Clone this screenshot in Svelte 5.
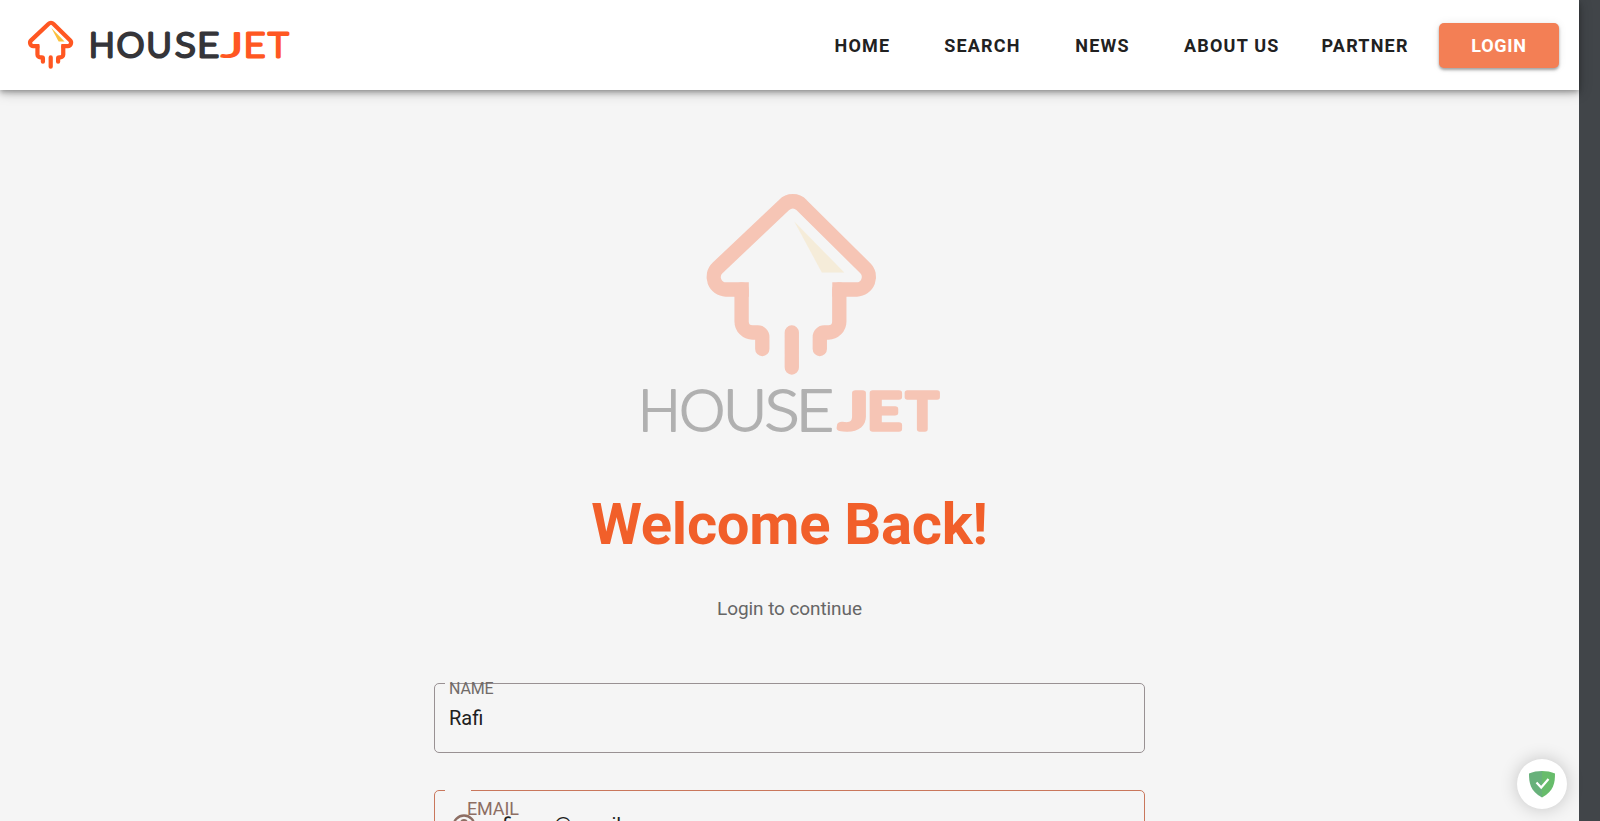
<script>
  const links = [
    { label: 'HOME', cls: 'home' },
    { label: 'SEARCH', cls: 'search' },
    { label: 'NEWS', cls: 'news' },
    { label: 'ABOUT US', cls: 'about' },
    { label: 'PARTNER', cls: 'partner' }
  ];

  const ctx = document.createElement('canvas').getContext('2d');

  // Stretch each wordmark letter so its inked area spans from left to right.
  function fit(letters, { weight, size, stroke }) {
    ctx.font = `${weight} 100px Lato`;
    return letters.map(([ch, left, right]) => {
      const m = ctx.measureText(ch);
      const lsb = (-m.actualBoundingBoxLeft * size) / 100;
      const ink = ((m.actualBoundingBoxRight + m.actualBoundingBoxLeft) * size) / 100;
      const k = (right - left - stroke) / ink;
      return { ch, k, x: left + stroke / 2 - lsb * k };
    });
  }

  const smallHouse = fit([['H', 91, 113], ['O', 117, 144], ['U', 148, 170], ['S', 175, 195], ['E', 199.5, 218.7]], { weight: 300, size: 33.2, stroke: 3 });
  const smallJet = fit([['J', 220.5, 240], ['E', 246, 265], ['T', 267, 289.5]], { weight: 300, size: 33.2, stroke: 3 });
  const bigHouse = fit([['H', 12.7, 46.2], ['O', 51, 93.2], ['U', 97.5, 132.7], ['S', 136, 167], ['E', 171.3, 201.8]], { weight: 300, size: 56.8, stroke: 1.8 });
  const bigJet = fit([['J', 207.3, 235], ['E', 240, 272], ['T', 274.5, 310]], { weight: 400, size: 50.5, stroke: 5.5 });
</script>

{#snippet rocket(width, color, glow)}
  <g fill="none" stroke={color} stroke-width={width}>
    <path d="M41.500 96H18.500A12.500 12.500 0 0 1 10.200 74.500L76.800 11.500A12 12 0 0 1 94.200 11.500L157.800 74.500A12.500 12.500 0 0 1 149.500 96H125" />
    <path d="M34.300 96V128A11 11 0 0 0 45.300 139H50.500A4.500 4.500 0 0 1 55 143.500V155.500M132 96V128A11 11 0 0 1 121 139H117A4.500 4.500 0 0 0 112.500 143.500V155.500M84.500 139V174" stroke-linecap="round" stroke-linejoin="round" />
  </g>
  <path d="M87 28L137 79H114.500Z" fill="#fbc03c" fill-opacity={glow} />
{/snippet}

{#snippet word(letters, y, cls)}
  {#each letters as l}
    <text class={cls} transform="translate({l.x} {y}) scale({l.k} 1)">{l.ch}</text>
  {/each}
{/snippet}

<div class="screen">
  <div class="page">
    <header>
      <svg class="brand" viewBox="0 0 300 90" width="300" height="90" role="img" aria-label="HOUSEJET">
        <g transform="translate(28.400 20.700) scale(.264)">{@render rocket(16, '#ff5722', 1)}</g>
        {@render word(smallHouse, 56.5, 'small')}
        {@render word(smallJet, 56.5, 'small jet')}
      </svg>
      <nav>
        {#each links as link}
          <a href="#top" class={link.cls}>{link.label}</a>
        {/each}
        <button>LOGIN</button>
      </nav>
    </header>
    <main>
      <svg class="hero" viewBox="0 0 320 265" width="320" height="265" role="img" aria-label="HOUSEJET">
        <g opacity=".3">
          <g transform="translate(77.300 13.500)">{@render rocket(14.3, '#f85420', 0.5)}</g>
          {@render word(bigHouse, 250.5, 'big')}
          {@render word(bigJet, 248.7, 'bold')}
        </g>
      </svg>
      <h1>Welcome Back!</h1>
      <p>Login to continue</p>
      <form>
        <fieldset>
          <legend></legend>
          <label for="name">NAME</label>
          <span class="value">Rafi</span>
        </fieldset>
        <fieldset class="email">
          <legend></legend>
          <label for="email">EMAIL</label>
          <svg class="person" viewBox="0 0 24 24" width="28" height="28">
            <path fill="#8d6e63" fill-rule="evenodd" d="M12 2a10 10 0 1 0 0 20 10 10 0 0 0 0-20zm0 2a8 8 0 1 1 0 16 8 8 0 0 1 0-16z" />
            <circle cx="12" cy="9.300" r="3.300" fill="#8d6e63" />
          </svg>
          <span class="value">rafi.mar@gmail.com</span>
        </fieldset>
      </form>
    </main>
    <div class="guard">
      <svg viewBox="0 0 28 28" width="28" height="28">
        <path d="M14 1C10 1 4.500 1.800 1 3.500c0 9 1 17.500 13 24z" fill="#68b17b" />
        <path d="M14 1c4 0 9.500.8 13 2.500 0 9-1 17.500-13 24z" fill="#67bc6b" />
        <path d="M8.500 12.500l4.700 5L20.500 9" fill="none" stroke="#fff" stroke-width="2.200" />
      </svg>
    </div>
  </div>
</div>

<style>
  :global(body) { overflow: hidden; background: #414549; }
  .screen { width: 1600px; height: 821px; overflow: hidden; background: #414549; font-family: Roboto, sans-serif; }
  .page { position: relative; width: 1579px; height: 821px; background: #f5f5f5; }
  header { position: relative; height: 90px; background: #fff; display: flex; justify-content: space-between; box-shadow: 0 2px 4px -1px rgba(0,0,0,.2), 0 4px 5px rgba(0,0,0,.12), 0 2px 12px rgba(0,0,0,.26); }
  .brand, .hero { display: block; flex: none; }
  .small { font: 300 33.2px Lato, sans-serif; fill: #353539; stroke: #353539; stroke-width: 3px; stroke-linejoin: round; vector-effect: non-scaling-stroke; }
  .jet { fill: #ff5722; stroke: #ff5722; }
  .big { font: 300 56.8px Lato, sans-serif; fill: #111; stroke: #111; stroke-width: 1.8px; stroke-linejoin: round; }
  .bold { font: 400 50.5px Lato, sans-serif; fill: #f85420; stroke: #f85420; stroke-width: 5.5px; stroke-linejoin: round; }
  nav { display: flex; align-items: center; padding-right: 20px; }
  a { flex: none; color: #212121; text-decoration: none; font-size: 18px; font-weight: 700; letter-spacing: 1.200px; line-height: 24px; margin-top: 2px; white-space: nowrap; }
  .home { width: 109.700px; }
  .search { width: 131.100px; }
  .news { width: 108.700px; }
  .about { width: 137.500px; }
  .partner { width: 117.500px; }
  button { width: 120px; height: 45px; margin: 1px 0 0; padding: 0; border: 0; border-radius: 5px; background: #f37f55; color: #fff; font: 700 18px Roboto, sans-serif; letter-spacing: .7px; box-shadow: 0 2px 3px rgba(0,0,0,.35), 0 0 10px rgba(0,0,0,.07); }
  main { display: flex; flex-direction: column; align-items: center; padding-top: 90px; }
  .hero { margin-left: 1px; }
  h1 { margin: 44px 0 0; font-size: 58px; line-height: 70px; font-weight: 700; letter-spacing: -.3px; color: #f15f2a; white-space: nowrap; }
  p { margin: 38px 0 0; font-size: 19px; line-height: 24px; letter-spacing: -.09px; color: #666; }
  form { width: 711px; margin-top: 62px; }
  fieldset { position: relative; height: 70px; box-sizing: border-box; margin: 0 0 37px; padding: 0; border: 1px solid #999193; border-radius: 5px; }
  legend { position: absolute; top: -1px; left: 10px; width: 5px; height: 1px; padding: 0; background: #f5f5f5; }
  label { position: absolute; left: 14px; top: -5px; font-size: 16px; line-height: 20px; letter-spacing: -.15px; color: #716b69; }
  .value { position: absolute; left: 14px; top: 22px; font-size: 20px; line-height: 24px; color: #202020; }
  .email { border-color: #c9775c; }
  .email legend { width: 26px; }
  .email label { left: 32px; top: 8px; font-size: 18px; color: #8d6e63; }
  .person { position: absolute; left: 15px; top: 21px; }
  .email .value { left: 50px; top: 22px; }
  .guard { position: absolute; right: 12px; bottom: 12px; width: 50px; height: 50px; border-radius: 50%; background: #fff; display: grid; place-items: center; box-shadow: 0 0 18px rgba(0,0,0,.2); }
</style>
